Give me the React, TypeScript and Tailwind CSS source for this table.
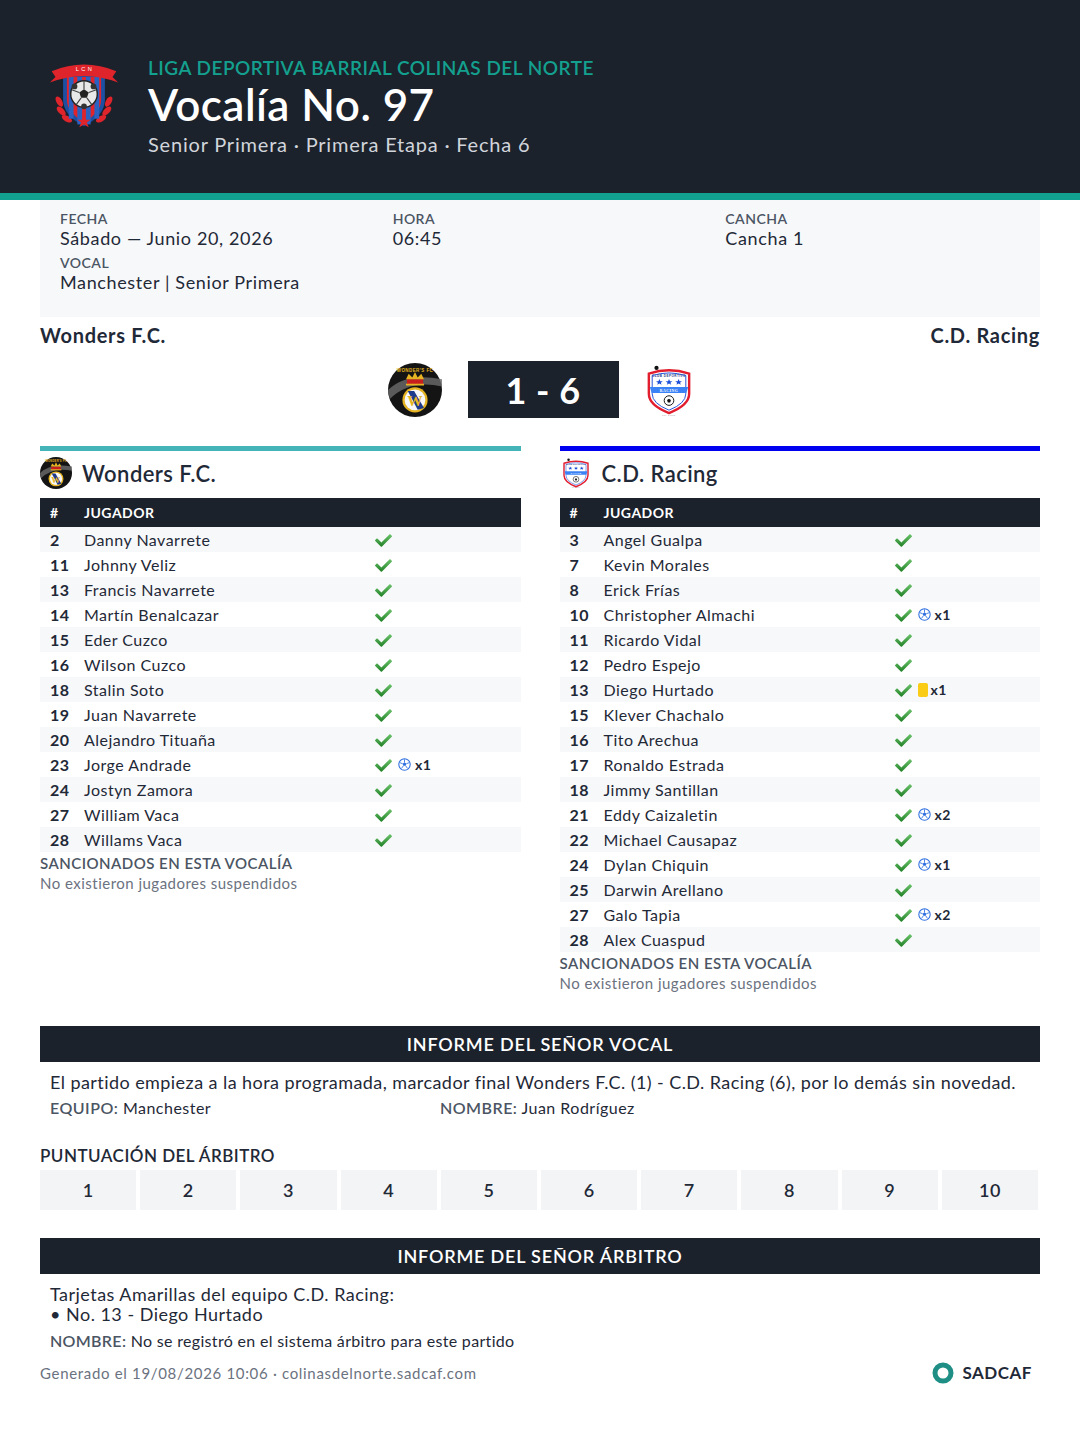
import React from 'react';

type Player = { n: number; name: string; goals?: number; yellow?: number };

const home: Player[] = [
  { n: 2, name: 'Danny Navarrete' },
  { n: 11, name: 'Johnny Veliz' },
  { n: 13, name: 'Francis Navarrete' },
  { n: 14, name: 'Martín Benalcazar' },
  { n: 15, name: 'Eder Cuzco' },
  { n: 16, name: 'Wilson Cuzco' },
  { n: 18, name: 'Stalin Soto' },
  { n: 19, name: 'Juan Navarrete' },
  { n: 20, name: 'Alejandro Tituaña' },
  { n: 23, name: 'Jorge Andrade', goals: 1 },
  { n: 24, name: 'Jostyn Zamora' },
  { n: 27, name: 'William Vaca' },
  { n: 28, name: 'Willams Vaca' },
];

const away: Player[] = [
  { n: 3, name: 'Angel Gualpa' },
  { n: 7, name: 'Kevin Morales' },
  { n: 8, name: 'Erick Frías' },
  { n: 10, name: 'Christopher Almachi', goals: 1 },
  { n: 11, name: 'Ricardo Vidal' },
  { n: 12, name: 'Pedro Espejo' },
  { n: 13, name: 'Diego Hurtado', yellow: 1 },
  { n: 15, name: 'Klever Chachalo' },
  { n: 16, name: 'Tito Arechua' },
  { n: 17, name: 'Ronaldo Estrada' },
  { n: 18, name: 'Jimmy Santillan' },
  { n: 21, name: 'Eddy Caizaletin', goals: 2 },
  { n: 22, name: 'Michael Causapaz' },
  { n: 24, name: 'Dylan Chiquin', goals: 1 },
  { n: 25, name: 'Darwin Arellano' },
  { n: 27, name: 'Galo Tapia', goals: 2 },
  { n: 28, name: 'Alex Cuaspud' },
];

function Check() {
  return (
    <svg width="17" height="14" viewBox="0 0 512 420" className="shrink-0">
      <defs>
        <linearGradient id="chk" x1="0" y1="0" x2="0" y2="1">
          <stop offset="0" stopColor="#6cc46c" />
          <stop offset="1" stopColor="#1f7f24" />
        </linearGradient>
      </defs>
      <path
        fill="url(#chk)"
        d="M173.9 409.4l-166.4-166.4c-10-10-10-26.2 0-36.2l36.2-36.2c10-10 26.2-10 36.2 0L192 282.7 432.1 42.6c10-10 26.2-10 36.2 0l36.2 36.2c10 10 10 26.2 0 36.2l-294.4 294.4c-10 10-26.2 10-36.2 0z"
      />
    </svg>
  );
}

function Ball() {
  return (
    <svg width="13" height="13" viewBox="0 0 24 24" className="shrink-0">
      <circle cx="12" cy="12" r="10.5" fill="#fff" stroke="#2f6fe0" strokeWidth="2" />
      <polygon points="12,8 15.5,10.5 14.2,14.5 9.8,14.5 8.5,10.5" fill="#2f6fe0" />
      <path d="M12 8V2.5M15.5 10.5l5-1.8M14.2 14.5l3.2 4.6M9.8 14.5l-3.2 4.6M8.5 10.5l-5-1.8" stroke="#2f6fe0" strokeWidth="1.6" />
    </svg>
  );
}

function LeagueLogo() {
  return (
    <svg width="76" height="76" viewBox="0 0 80 80">
      {/* laurel */}
      <g fill="#e0242b">
        <ellipse cx="14" cy="48" rx="3" ry="6" transform="rotate(-30 14 48)" />
        <ellipse cx="16" cy="58" rx="3" ry="6" transform="rotate(-45 16 58)" />
        <ellipse cx="22" cy="66" rx="3" ry="6" transform="rotate(-60 22 66)" />
        <ellipse cx="66" cy="48" rx="3" ry="6" transform="rotate(30 66 48)" />
        <ellipse cx="64" cy="58" rx="3" ry="6" transform="rotate(45 64 58)" />
        <ellipse cx="58" cy="66" rx="3" ry="6" transform="rotate(60 58 66)" />
      </g>
      {/* shield */}
      <path d="M18 20 H62 V46 Q62 62 40 74 Q18 62 18 46 Z" fill="#1d4fa3" />
      <path d="M22 22 H58 V46 Q58 59 40 70 Q22 59 22 46 Z" fill="#e0242b" />
      <g fill="#2b62c2">
        <rect x="24" y="22" width="5" height="44" />
        <rect x="33" y="22" width="5" height="50" />
        <rect x="42" y="22" width="5" height="50" />
        <rect x="51" y="22" width="5" height="44" />
      </g>
      {/* ball */}
      <circle cx="40" cy="40" r="14" fill="#e8e8e8" stroke="#222" strokeWidth="1.5" />
      <polygon points="40,35 45,38.5 43,44 37,44 35,38.5" fill="#222" />
      <path d="M40 26v9M45 38.5l8-3M43 44l5 7M37 44l-5 7M35 38.5l-8-3" stroke="#444" strokeWidth="1.2" />
      <circle cx="30" cy="32" r="3" fill="#333" />
      <circle cx="50" cy="32" r="3" fill="#333" />
      <circle cx="40" cy="53" r="3" fill="#333" />
      {/* banner */}
      <path d="M6 16 Q40 2 74 16 L70 22 L76 28 Q40 14 4 28 L10 22 Z" fill="#e0242b" />
      <text x="40" y="16" textAnchor="middle" fontSize="6" fill="#fff" fontFamily="Liberation Sans, sans-serif">L C N</text>
      {/* star */}
      <polygon points="40,62 42,67 47,67 43,70 45,75 40,72 35,75 37,70 33,67 38,67" fill="#e0242b" />
    </svg>
  );
}

function WondersLogo({ size }: { size: number }) {
  return (
    <svg width={size} height={size} viewBox="0 0 60 60">
      <circle cx="30" cy="30" r="30" fill="#141414" />
      <path d="M0 30 Q20 10 60 18 L60 26 Q24 18 2 40 Z" fill="#6b6b6b" opacity="0.8" />
      <text x="30" y="10" textAnchor="middle" fontSize="5" fontWeight="bold" fill="#e6b422" fontFamily="Liberation Sans, sans-serif">WONDER'S FC</text>
      {/* crown */}
      <rect x="21" y="18" width="18" height="6" fill="#c81e1e" />
      <path d="M20 18 L23 12 L27 16 L30 10 L33 16 L37 12 L40 18 Z" fill="#e6b422" />
      <rect x="20" y="23" width="20" height="2" fill="#e6b422" />
      {/* emblem */}
      <circle cx="30" cy="41" r="14" fill="#e6b422" />
      <circle cx="30" cy="41" r="11.5" fill="#f8f8f8" />
      <path d="M22 31 L29 31 L40 50 L33 52 Z" fill="#1e3a8a" />
      <text x="30" y="48" textAnchor="middle" fontSize="17" fontWeight="bold" fill="#e6b422" fontFamily="Liberation Serif, serif">W</text>
    </svg>
  );
}

function RacingLogo({ w, h }: { w: number; h: number }) {
  return (
    <svg width={w} height={h} viewBox="0 0 50 56">
      <path d="M4 11 Q25 4 46 11 L46 32 Q46 44 25 52 Q4 44 4 32 Z" fill="#fff" stroke="#e11d2e" strokeWidth="2.5" />
      <path d="M7.5 13 Q25 7.5 42.5 13 L42.5 32 Q42.5 42 25 49 Q7.5 42 7.5 32 Z" fill="none" stroke="#1d4ed8" strokeWidth="1" />
      <circle cx="12" cy="5" r="2.2" fill="#111" />
      <text x="25" y="14" textAnchor="middle" fontSize="3.2" fontWeight="bold" fill="#1e3a8a" fontFamily="Liberation Sans, sans-serif">CLUB DEPORTIVO</text>
      <rect x="9" y="16" width="32" height="7" fill="#fff" />
      <g fill="#1d4ed8">
        <polygon points="15,16.5 16,19 18.5,19 16.5,20.5 17.3,22.5 15,21.2 12.7,22.5 13.5,20.5 11.5,19 14,19" />
        <polygon points="25,16.5 26,19 28.5,19 26.5,20.5 27.3,22.5 25,21.2 22.7,22.5 23.5,20.5 21.5,19 24,19" />
        <polygon points="35,16.5 36,19 38.5,19 36.5,20.5 37.3,22.5 35,21.2 32.7,22.5 33.5,20.5 31.5,19 34,19" />
      </g>
      <path d="M5 25 H45 L43 31 H7 Z" fill="#3b82f6" />
      <text x="25" y="29.6" textAnchor="middle" fontSize="4" fontWeight="bold" fill="#fff" fontFamily="Liberation Serif, serif">RACING</text>
      <circle cx="25" cy="39" r="5" fill="#fff" stroke="#111" strokeWidth="1" />
      <polygon points="25,37 27,38.5 26.2,41 23.8,41 23,38.5" fill="#111" />
      <text x="25" y="55" textAnchor="middle" fontSize="3" fill="#555" fontFamily="Liberation Serif, serif">FC Elite</text>
    </svg>
  );
}

function TeamTable({ players, name, logo, border }: { players: Player[]; name: string; logo: React.ReactNode; border: string }) {
  return (
    <div>
      <div className={`h-[5px] ${border}`} />
      <div className="flex items-center gap-[10px] pt-[6px] pb-[9px] h-[47px]">
        <div className="w-[32px] h-[32px] flex items-center justify-center">{logo}</div>
        <h2 className="text-[22px] font-semibold tracking-[0.02em] text-[#1f2937]">{name}</h2>
      </div>
      <div className="flex items-center h-[29px] bg-[#1b222c] text-white text-[14px] font-bold">
        <div className="w-[44px] pl-[10px]">#</div>
        <div>JUGADOR</div>
      </div>
      {players.map((p, i) => (
        <div key={p.n} className={`flex items-center h-[25px] text-[16px] text-[#1f2937] ${i % 2 === 0 ? 'bg-[#f7f8fa]' : 'bg-white'}`}>
          <div className="w-[44px] pl-[10px] font-bold">{p.n}</div>
          <div className="w-[291px]">{p.name}</div>
          <div className="flex items-center gap-[6px]">
            <Check />
            {p.goals ? (
              <span className="flex items-center gap-[4px] text-[14px] font-bold">
                <Ball />x{p.goals}
              </span>
            ) : null}
            {p.yellow ? (
              <span className="flex items-center gap-[3px] text-[14px] font-bold">
                <span className="inline-block w-[10px] h-[14px] rounded-[2px] bg-[#facc15]" />x{p.yellow}
              </span>
            ) : null}
          </div>
        </div>
      ))}
      <div className="text-[15px] leading-[20px] font-semibold text-[#4b5563] mt-[1px]">SANCIONADOS EN ESTA VOCALÍA</div>
      <div className="text-[15px] leading-[20px] text-[#6b7280]">No existieron jugadores suspendidos</div>
    </div>
  );
}

export default function App() {
  return (
    <div className="w-[1080px] min-h-[1454px] bg-white text-[#1f2937] tracking-[0.03em]" style={{ fontFamily: 'Lato, "Noto Sans", sans-serif' }}>
      {/* Header */}
      <header className="bg-[#1b222c] h-[193px] flex items-start pl-[46px] pt-[56px]">
        <LeagueLogo />
        <div className="ml-[26px]">
          <div className="text-[19px] leading-[24px] font-semibold text-[#14a08e]">LIGA DEPORTIVA BARRIAL COLINAS DEL NORTE</div>
          <h1 className="text-[44px] leading-[48px] font-semibold tracking-[0.01em] text-white">Vocalía No. 97</h1>
          <div className="text-[20px] leading-[28px] tracking-[0.04em] text-[#d1d5db] mt-[2px]">Senior Primera · Primera Etapa · Fecha 6</div>
        </div>
      </header>
      <div className="h-[7px] bg-[#12a090]" />

      <main className="px-[40px]">
        {/* Info box */}
        <div className="bg-[#f7f8fa] px-[20px] pt-[11px] pb-[24px]">
          <div className="grid grid-cols-3 gap-x-[38px]">
            <div>
              <div className="text-[14px] leading-[16px] font-semibold text-[#4b5563]">FECHA</div>
              <div className="text-[18px] leading-[22px] tracking-[0.035em]">Sábado — Junio 20, 2026</div>
            </div>
            <div>
              <div className="text-[14px] leading-[16px] font-semibold text-[#4b5563]">HORA</div>
              <div className="text-[18px] leading-[22px] tracking-[0.035em]">06:45</div>
            </div>
            <div>
              <div className="text-[14px] leading-[16px] font-semibold text-[#4b5563]">CANCHA</div>
              <div className="text-[18px] leading-[22px] tracking-[0.035em]">Cancha 1</div>
            </div>
          </div>
          <div className="mt-[6px]">
            <div className="text-[14px] leading-[16px] font-semibold text-[#4b5563]">VOCAL</div>
            <div className="text-[18px] leading-[22px] tracking-[0.035em]">Manchester | Senior Primera</div>
          </div>
        </div>

        {/* Teams */}
        <div className="flex justify-between mt-[4px] text-[20px] leading-[28px] font-bold tracking-[0.035em]">
          <span>Wonders F.C.</span>
          <span>C.D. Racing</span>
        </div>
        <div className="flex items-center justify-center gap-[26px] mt-[12px]">
          <WondersLogo size={54} />
          <div className="w-[151px] h-[57px] bg-[#1b222c] text-white text-[36px] font-bold flex items-center justify-center">1 - 6</div>
          <RacingLogo w={48} h={54} />
        </div>

        <div className="grid grid-cols-2 gap-[39px] items-start mt-[28px]">
          <TeamTable players={home} name="Wonders F.C." logo={<WondersLogo size={32} />} border="bg-[#45b4b9]" />
          <TeamTable players={away} name="C.D. Racing" logo={<RacingLogo w={30} h={32} />} border="bg-[#0000f0]" />
        </div>

        {/* Informe vocal */}
        <div className="mt-[33px] h-[36px] bg-[#1b222c] text-white text-[18px] font-semibold tracking-[0.045em] flex items-center justify-center">INFORME DEL SEÑOR VOCAL</div>
        <div className="px-[10px] pt-[8px]">
          <p className="text-[18px] leading-[24px] tracking-[0.024em]">El partido empieza a la hora programada, marcador final Wonders F.C. (1) - C.D. Racing (6), por lo demás sin novedad.</p>
          <div className="flex text-[16px] leading-[20px] mt-[4px]">
            <div className="w-[390px]">
              <span className="font-semibold text-[#4b5563]">EQUIPO:</span> Manchester
            </div>
            <div>
              <span className="font-semibold text-[#4b5563]">NOMBRE:</span> Juan Rodríguez
            </div>
          </div>
        </div>

        <div className="mt-[26px] text-[17px] leading-[24px] font-semibold">PUNTUACIÓN DEL ÁRBITRO</div>
        <div className="grid grid-cols-10 gap-[4px] w-[998px] mt-[2px]">
          {[1, 2, 3, 4, 5, 6, 7, 8, 9, 10].map((n) => (
            <div key={n} className="h-[40px] bg-[#f3f4f6] flex items-center justify-center text-[18px] font-semibold">{n}</div>
          ))}
        </div>

        {/* Informe arbitro */}
        <div className="mt-[28px] h-[36px] bg-[#1b222c] text-white text-[18px] font-semibold tracking-[0.045em] flex items-center justify-center">INFORME DEL SEÑOR ÁRBITRO</div>
        <div className="px-[10px] pt-[10px]">
          <div className="text-[18px] leading-[20px]">Tarjetas Amarillas del equipo C.D. Racing:</div>
          <div className="text-[18px] leading-[20px]">• No. 13 - Diego Hurtado</div>
          <div className="text-[16px] leading-[20px] tracking-[0.02em] mt-[7px]">
            <span className="font-semibold text-[#4b5563]">NOMBRE:</span> No se registró en el sistema árbitro para este partido
          </div>
        </div>

        <div className="flex items-center justify-between mt-[9px] pr-[8px]">
          <div className="text-[15px] leading-[20px] tracking-[0.045em] text-[#6b7280]">Generado el 19/08/2026 10:06 · colinasdelnorte.sadcaf.com</div>
          <div className="flex items-center gap-[8px]">
            <svg width="22" height="22" viewBox="0 0 22 22">
              <circle cx="11" cy="11" r="8" fill="none" stroke="#1f8f86" strokeWidth="5" />
            </svg>
            <span className="text-[17px] font-bold tracking-[0.03em] text-[#1f2937]">SADCAF</span>
          </div>
        </div>
      </main>
    </div>
  );
}
